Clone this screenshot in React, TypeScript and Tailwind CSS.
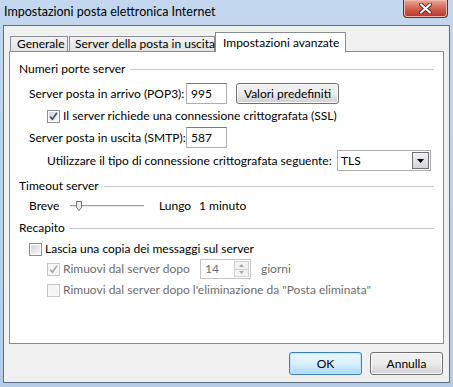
import clsx from 'clsx';

type CheckProps = {checked?: boolean; disabled?: boolean};

const Check = ({checked, disabled}: CheckProps) => (
  <span
    className={clsx(
      'relative flex h-[13px] w-[13px] shrink-0 border p-px',
      disabled ? 'border-[#c7c7c7] bg-[#f7f7f7]' : 'border-[#8e8f8f] bg-white',
    )}>
    <span
      className={clsx(
        'h-full w-full',
        disabled
          ? 'bg-[#f4f4f4]'
          : 'bg-gradient-to-br from-[#d3d6db] to-[#f8f8f8]',
      )}
    />
    {checked && (
      <svg
        className="absolute left-px top-px"
        width="9"
        height="9"
        viewBox="0 0 9 9">
        <path
          d="M1.2 4.6 L3.5 7.2 L7.9 0.8"
          fill="none"
          stroke={disabled ? '#a8a8a8' : '#40516e'}
          strokeWidth="1.7"
        />
      </svg>
    )}
  </span>
);

const GroupHeader = ({label}: {label: string}) => (
  <div className="flex h-[16px] items-center pl-[9px] pr-[9px]">
    <span className="mr-[5px]">{label}</span>
    <span className="h-px flex-1 bg-[#c9c9c9]" />
  </div>
);

const TextBox = ({value}: {value: string}) => (
  <div className="flex h-[21px] w-[41px] items-center border border-[#abadb3] border-t-[#7a7a7a] bg-white pl-[4px]">
    {value}
  </div>
);

const WinButton = ({
  label,
  primary,
  className,
}: {
  label: string;
  primary?: boolean;
  className?: string;
}) => (
  <button
    type="button"
    className={clsx(
      'flex items-center justify-center rounded-[3px] border',
      primary
        ? 'border-[#3c7fb1] bg-gradient-to-b from-[#eaf6fd] via-[#d9f0fc] to-[#a7d9f5] shadow-[inset_0_0_0_1px_#c0e5f9]'
        : 'border-[#707070] bg-gradient-to-b from-[#f2f2f2] via-[#ebebeb] to-[#cfcfcf] shadow-[inset_0_0_0_1px_#fcfcfc]',
      className,
    )}>
    {label}
  </button>
);

export default function App() {
  return (
    <div className="flex h-[387px] w-[453px] flex-col whitespace-nowrap bg-gradient-to-b from-[#c3d8ee] to-[#b4cce6] font-['Lato',sans-serif] text-[12px] leading-none text-black">
      {/* title bar */}
      <div className="flex h-[25px] items-start">
        <div className="flex h-[25px] flex-1 items-center pl-[4px] pb-px text-[12.5px] text-black">
          Impostazioni posta elettronica Internet
        </div>
        <div className="mr-[5px] flex h-[18px] w-[45px] items-center justify-center rounded-b-[4px] border border-t-0 border-[#6e2c26] bg-gradient-to-b from-[#e9a997] via-[#d0624f] to-[#b8332a] shadow-[inset_0_0_0_1px_#f0b8a8]">
          <svg width="13" height="11" viewBox="0 0 13 11">
            <path
              d="M2 1.5 L11 9.5 M11 1.5 L2 9.5"
              stroke="#5b2420"
              strokeWidth="4"
              strokeLinecap="round"
            />
            <path
              d="M2 1.5 L11 9.5 M11 1.5 L2 9.5"
              stroke="#ffffff"
              strokeWidth="2.2"
              strokeLinecap="round"
            />
          </svg>
        </div>
      </div>

      {/* client area */}
      <div className="mb-[4px] ml-[3px] mr-[3px] flex flex-1 flex-col border border-[#5d6e84] bg-[#f0f0f0] px-[5px] pt-[6px]">
        {/* tabs */}
        <div className="flex h-[20px] items-end">
          <span className="h-[1px] w-[1px] bg-[#898c95]" />
          <div className="flex h-[16px] w-[58px] items-center border border-[#898c95] bg-gradient-to-b from-[#f2f2f2] to-[#e3e3e3] pl-[6px]">
            Generale
          </div>
          <span className="h-[1px] w-[1px] bg-[#898c95]" />
          <div className="flex h-[16px] w-[146px] items-center border border-[#898c95] bg-gradient-to-b from-[#f2f2f2] to-[#e3e3e3] pl-[5px]">
            Server della posta in uscita
          </div>
          <div className="flex h-[20px] w-[131px] items-start border border-b-0 border-[#898c95] bg-white pl-[7px] pt-[4px]">
            Impostazioni avanzate
          </div>
          <span className="h-[1px] flex-1 bg-[#898c95]" />
        </div>

        {/* panel */}
        <div className="flex h-[292px] flex-col border border-t-0 border-[#898c95] bg-white pt-[9px]">
          <GroupHeader label="Numeri porte server" />

          <div className="mt-[6px] flex h-[21px] items-center pl-[19px]">
            <span className="w-[157px]">Server posta in arrivo (POP3):</span>
            <TextBox value="995" />
            <WinButton
              label="Valori predefiniti"
              className="ml-[9px] h-[21px] w-[103px]"
            />
          </div>

          <div className="mt-[4px] flex h-[16px] items-center gap-[2px] pl-[37px]">
            <Check checked />
            <span className="ml-px">
              Il server richiede una connessione crittografata (SSL)
            </span>
          </div>

          <div className="mt-[3px] flex h-[21px] items-center pl-[19px]">
            <span className="w-[157px]">Server posta in uscita (SMTP):</span>
            <TextBox value="587" />
          </div>

          <div className="mt-[2px] flex h-[21px] items-center pl-[37px]">
            <span className="w-[290px]">
              Utilizzare il tipo di connessione crittografata seguente:
            </span>
            <div className="flex h-[21px] w-[94px] items-center justify-between border border-[#abadb3] bg-white pl-[3px] pr-px">
              <span>TLS</span>
              <span className="flex h-[17px] w-[17px] items-center justify-center border border-[#707070] bg-gradient-to-b from-[#f2f2f2] to-[#d5d5d5]">
                <svg width="7" height="4" viewBox="0 0 7 4">
                  <path d="M0 0 H7 L3.5 4 Z" fill="#000" />
                </svg>
              </span>
            </div>
          </div>

          <div className="mt-[7px]">
            <GroupHeader label="Timeout server" />
          </div>

          <div className="mt-[4px] flex h-[16px] items-center pl-[19px]">
            <span className="w-[41px]">Breve</span>
            <div className="relative flex h-[12px] w-[74px] items-center">
              <span className="h-[3px] w-full border-t border-[#9c9c9c] bg-[#e7eaea] border-b border-b-white" />
              <svg
                className="absolute left-[6px] top-[1px]"
                width="6"
                height="10"
                viewBox="0 0 6 10">
                <path
                  d="M0.5 0.5 H5.5 V6.5 L3 9.5 L0.5 6.5 Z"
                  fill="#ececec"
                  stroke="#707070"
                />
              </svg>
            </div>
            <span className="ml-[15px] w-[40px]">Lungo</span>
            <span>1 minuto</span>
          </div>

          <div className="mt-[6px]">
            <GroupHeader label="Recapito" />
          </div>

          <div className="mt-[5px] flex h-[16px] items-center gap-[3px] pl-[19px]">
            <Check />
            <span>Lascia una copia dei messaggi sul server</span>
          </div>

          <div className="mt-[2px] flex h-[20px] items-center pl-[37px] text-[#6d6d6d]">
            <Check checked disabled />
            <span className="ml-[3px] w-[137px]">Rimuovi dal server dopo</span>
            <div className="flex h-[20px] w-[51px] items-center justify-between border border-[#c4c4c4] bg-white pl-[4px] pr-px">
              <span>14</span>
              <span className="flex h-[16px] w-[15px] flex-col border border-[#d0d0d0]">
                <span className="flex flex-1 items-center justify-center border-b border-[#d0d0d0] bg-[#f3f3f3]">
                  <svg width="5" height="3" viewBox="0 0 5 3">
                    <path d="M0 3 H5 L2.5 0 Z" fill="#a8a8a8" />
                  </svg>
                </span>
                <span className="flex flex-1 items-center justify-center bg-[#f3f3f3]">
                  <svg width="5" height="3" viewBox="0 0 5 3">
                    <path d="M0 0 H5 L2.5 3 Z" fill="#a8a8a8" />
                  </svg>
                </span>
              </span>
            </div>
            <span className="ml-[10px]">giorni</span>
          </div>

          <div className="mt-[3px] flex h-[16px] items-center gap-[3px] pl-[37px] text-[#6d6d6d]">
            <Check disabled />
            <span>
              Rimuovi dal server dopo l'eliminazione da "Posta eliminata"
            </span>
          </div>
        </div>

        {/* buttons */}
        <div className="mt-[8px] flex justify-end gap-[8px] pr-[1px]">
          <WinButton label="OK" primary className="h-[23px] w-[73px]" />
          <WinButton label="Annulla" className="h-[23px] w-[73px]" />
        </div>
      </div>
    </div>
  );
}
